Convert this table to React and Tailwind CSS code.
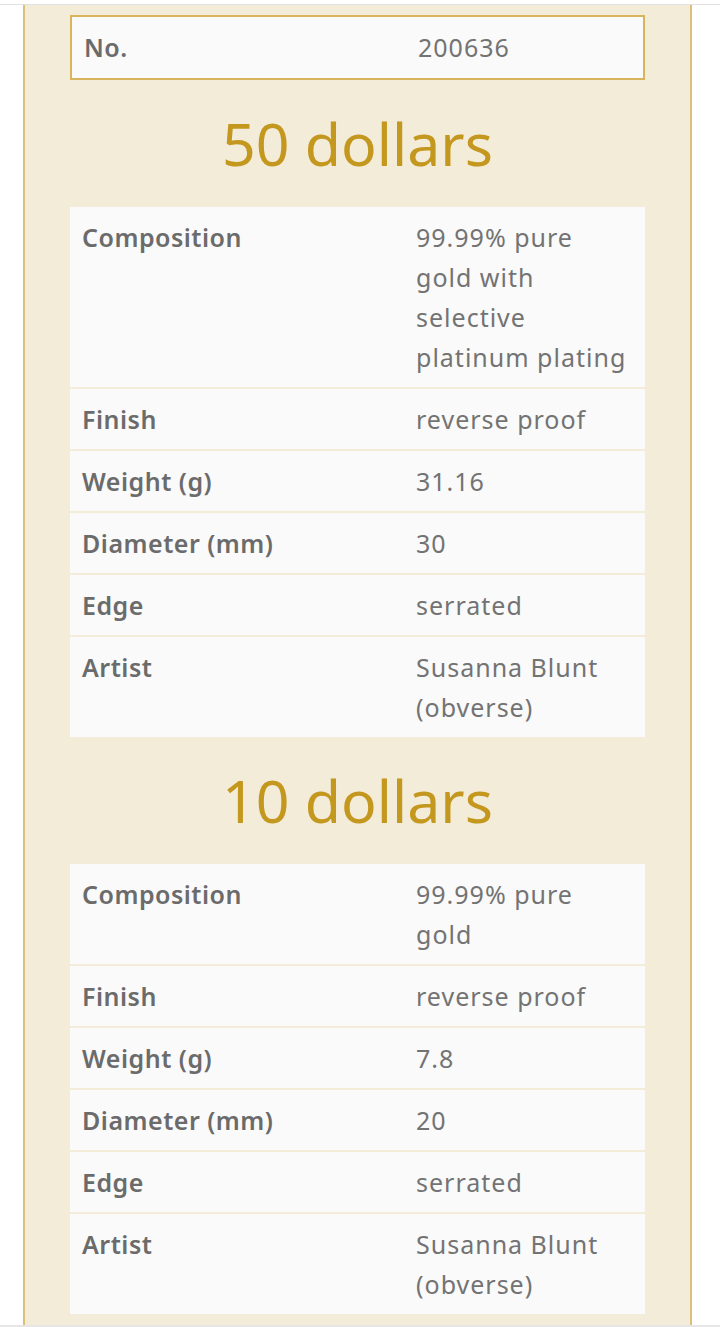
import React from 'react';

const coins = [
  {
    title: '50 dollars',
    rows: [
      ['Composition', '99.99% pure gold with selective platinum plating'],
      ['Finish', 'reverse proof'],
      ['Weight (g)', '31.16'],
      ['Diameter (mm)', '30'],
      ['Edge', 'serrated'],
      ['Artist', 'Susanna Blunt (obverse)'],
    ],
  },
  {
    title: '10 dollars',
    rows: [
      ['Composition', '99.99% pure gold'],
      ['Finish', 'reverse proof'],
      ['Weight (g)', '7.8'],
      ['Diameter (mm)', '20'],
      ['Edge', 'serrated'],
      ['Artist', 'Susanna Blunt (obverse)'],
    ],
  },
];

const SpecTable = ({ rows }) => (
  <div className="flex flex-col gap-[2px]">
    {rows.map(([label, value]) => (
      <div key={label} className="flex bg-[#fafafa] px-3 py-[10px] text-[25px] leading-[40px]">
        <div className="w-[334px] shrink-0 font-semibold tracking-[0.02em] text-[#6b6b6b]">{label}</div>
        <div className="w-[214px] tracking-[0.04em] text-[#737373]">{value}</div>
      </div>
    ))}
  </div>
);

const App = () => {
  return (
    <div className="w-[720px] h-[1327px] bg-white overflow-hidden font-['Noto_Sans',sans-serif]">
      <div className="h-[5px] border-b border-[#e2e2e2]"></div>
      <div className="ml-[23px] w-[669px] h-[1320px] bg-[#f3ecd9] border-x-2 border-[#dcc07a] px-[45px] pt-[10px]">
        {/* Coin number */}
        <div className="flex h-[65px] items-center bg-[#fafafa] border-2 border-[#d8b45c] px-3 text-[25px]">
          <div className="w-[334px] shrink-0 font-semibold tracking-[0.02em] text-[#6b6b6b]">No.</div>
          <div className="tracking-[0.04em] text-[#737373]">200636</div>
        </div>

        {coins.map((coin) => (
          <div key={coin.title}>
            <h2 className="h-[127px] flex items-center justify-center text-[59px] text-[#c4981f] leading-none">
              {coin.title}
            </h2>
            <SpecTable rows={coin.rows} />
          </div>
        ))}
      </div>
      <div className="h-[2px] bg-[#e6e6e6]"></div>
    </div>
  );
};

export default App;
